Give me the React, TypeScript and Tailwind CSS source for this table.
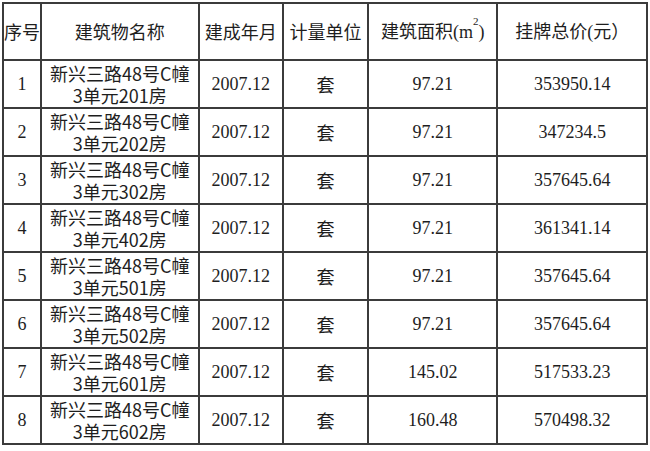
const rows = [
  { no: '1', room: '201', area: '97.21', price: '353950.14' },
  { no: '2', room: '202', area: '97.21', price: '347234.5' },
  { no: '3', room: '302', area: '97.21', price: '357645.64' },
  { no: '4', room: '402', area: '97.21', price: '361341.14' },
  { no: '5', room: '501', area: '97.21', price: '357645.64' },
  { no: '6', room: '502', area: '97.21', price: '357645.64' },
  { no: '7', room: '601', area: '145.02', price: '517533.23' },
  { no: '8', room: '602', area: '160.48', price: '570498.32' },
];

const cjk = "font-['Noto_Sans_CJK_SC',sans-serif]";
const serif = "font-['Liberation_Serif','Noto_Sans_CJK_SC',serif]";
const cell = 'border-r-2 border-b-2 border-[#3b3b3b] p-0 text-center align-middle';

export default function App() {
  return (
    <div className="w-[650px] h-[451px] bg-white pl-[2px] pt-[2px] text-[#1e1e1e]">
      <table className="border-separate border-spacing-0 table-fixed border-l-2 border-t-2 border-[#3b3b3b] w-[646px]">
        <colgroup>
          <col className="w-[38px]" />
          <col className="w-[157px]" />
          <col className="w-[84px]" />
          <col className="w-[85px]" />
          <col className="w-[129px]" />
          <col className="w-[149px]" />
        </colgroup>
        <thead>
          <tr className="h-[57px]">
            <th className={`${cell} ${cjk} text-[18px] font-normal`}>序号</th>
            <th className={`${cell} ${cjk} text-[18px] font-normal`}>建筑物名称</th>
            <th className={`${cell} ${cjk} text-[18px] font-normal`}>建成年月</th>
            <th className={`${cell} ${cjk} text-[18px] font-normal`}>计量单位</th>
            <th className={`${cell} ${cjk} text-[18px] font-normal whitespace-nowrap`}>
              建筑面积
              <span className={`${serif} text-[18px]`}>
                (m<span className="inline-block align-top text-[11px] leading-[11px] -mt-[1px]">2</span>)
              </span>
            </th>
            <th className={`${cell} ${cjk} text-[18px] font-normal`}>
              挂牌总价<span className={serif}>(</span>元）
            </th>
          </tr>
        </thead>
        <tbody>
          {rows.map((r) => (
            <tr key={r.no} className="h-[48px]">
              <td className={`${cell} ${serif} text-[18px]`}>{r.no}</td>
              <td className={`${cell} ${cjk} text-[18px] leading-[22px]`}>
                <div>新兴三路48号C幢</div>
                <div>3单元{r.room}房</div>
              </td>
              <td className={`${cell} ${serif} text-[18px]`}>2007.12</td>
              <td className={`${cell} ${cjk} text-[18px]`}>套</td>
              <td className={`${cell} ${serif} text-[18px]`}>{r.area}</td>
              <td className={`${cell} ${serif} text-[18px]`}>{r.price}</td>
            </tr>
          ))}
        </tbody>
      </table>
    </div>
  );
}
